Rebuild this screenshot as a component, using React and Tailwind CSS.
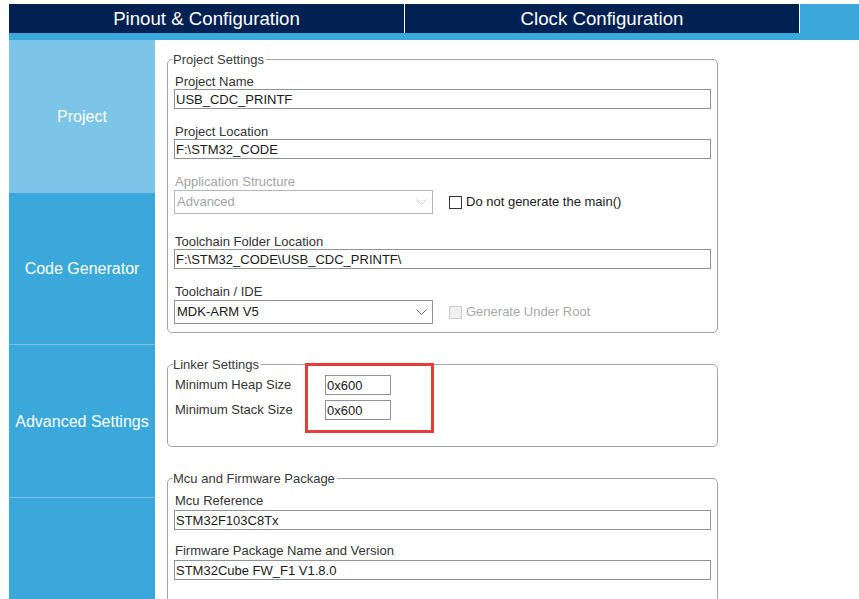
import React from "react";

const Label = ({ children, muted, className = "" }) => (
	<div className={`leading-[15px] pl-px ${muted ? "text-[#a3a3a3]" : "text-[#333]"} ${className}`}>{children}</div>
);

const TextBox = ({ value, className = "" }) => (
	<input
		readOnly
		value={value}
		className={`block h-[20px] border border-[#8e9398] px-[1px] text-[13px] text-[#1a1a1a] bg-white outline-none ${className}`}
	/>
);

const Chevron = ({ color }) => (
	<svg width="11" height="6" viewBox="0 0 11 6" fill="none">
		<polyline points="0.5,0.5 5.5,5.5 10.5,0.5" stroke={color} strokeWidth="1" />
	</svg>
);

const Select = ({ value, disabled }) => (
	<div
		className={`flex items-center justify-between w-[259px] h-[24px] border pl-[2px] pr-[5px] ${
			disabled ? "border-[#b4b8bc] text-[#a3a3a3]" : "border-[#8e9398] text-[#1a1a1a]"
		}`}
	>
		<span>{value}</span>
		<Chevron color={disabled ? "#c6c6c6" : "#6f6f6f"} />
	</div>
);

const Check = ({ label, disabled }) => (
	<div className="flex items-center gap-[4px] ml-[16px]">
		<span
			className={`block w-[13px] h-[13px] border ${
				disabled ? "border-[#cccccc] bg-[#f0f0f0]" : "border-[#333] bg-white"
			}`}
		/>
		<span className={disabled ? "text-[#a8a8a8]" : "text-[#1a1a1a]"}>{label}</span>
	</div>
);

const Group = ({ title, children, className = "" }) => (
	<fieldset className={`w-[551px] border border-[#a0a5aa] rounded-[5px] px-[6px] ${className}`}>
		<legend className="leading-[15px] -ml-px pr-[2px] text-[#3a3a3a]">{title}</legend>
		{children}
	</fieldset>
);

const SideItem = ({ label, active, className = "" }) => (
	<div
		className={`flex items-center justify-center text-[16px] text-white ${
			active ? "bg-[#7cc5e9]" : "bg-[#3aa8db]"
		} ${className}`}
	>
		{label}
	</div>
);

export default function App() {
	return (
		<div className="w-[859px] h-[599px] overflow-hidden bg-white pl-[9px] pt-[4px] flex flex-col text-[13px] font-['Liberation_Sans',Arial,sans-serif]">
			{/* top tabs */}
			<div className="flex h-[29px] bg-[#3aa8db] shrink-0">
				<div className="w-[395px] bg-[#022153] text-white text-[18.67px] flex items-center justify-center">
					Pinout &amp; Configuration
				</div>
				<div className="w-px bg-white" />
				<div className="w-[394px] bg-[#022153] text-white text-[18.67px] flex items-center justify-center">
					Clock Configuration
				</div>
				<div className="w-px bg-white" />
			</div>
			<div className="h-[7px] bg-[#3aa8db] shrink-0" />

			<div className="flex flex-1 min-h-0">
				{/* sidebar */}
				<div className="w-[146px] shrink-0 flex flex-col bg-[#3aa8db]">
					<SideItem label="Project" active className="h-[153px]" />
					<SideItem label="Code Generator" className="h-[152px] pt-px border-b border-[#7cc5e9]" />
					<SideItem label="Advanced Settings" className="h-[153px] pt-[2px] border-b border-[#7cc5e9]" />
				</div>

				{/* settings */}
				<div className="relative flex-1 pl-[12px] pt-[12px]">
					<Group title="Project Settings" className="pt-[7px] pb-[8px]">
						<Label>Project Name</Label>
						<TextBox value="USB_CDC_PRINTF" className="w-full" />

						<Label className="mt-[15px]">Project Location</Label>
						<TextBox value="F:\STM32_CODE" className="w-full" />

						<Label muted className="mt-[15px]">Application Structure</Label>
						<div className="flex items-center mt-px">
							<Select value="Advanced" disabled />
							<Check label="Do not generate the main()" />
						</div>

						<Label className="mt-[20px]">Toolchain Folder Location</Label>
						<TextBox value="F:\STM32_CODE\USB_CDC_PRINTF\" className="w-full" />

						<Label className="mt-[15px]">Toolchain / IDE</Label>
						<div className="flex items-center mt-px">
							<Select value="MDK-ARM V5" />
							<Check label="Generate Under Root" disabled />
						</div>
					</Group>

					<Group title="Linker Settings" className="mt-[24px] pt-[3px] pb-[26px]">
						<div className="grid grid-cols-[150px_66px] gap-y-[5px] items-center pl-px">
							<span className="text-[#333]">Minimum Heap Size</span>
							<TextBox value="0x600" className="w-[66px]" />
							<span className="text-[#333]">Minimum Stack Size</span>
							<TextBox value="0x600" className="w-[66px]" />
						</div>
					</Group>

					<Group title="Mcu and Firmware Package" className="mt-[24px] pt-[7px] pb-[40px]">
						<Label>Mcu Reference</Label>
						<TextBox value="STM32F103C8Tx" className="w-full mt-[2px]" />

						<Label className="mt-[13px]">Firmware Package Name and Version</Label>
						<TextBox value="STM32Cube FW_F1 V1.8.0" className="w-full mt-[2px]" />
					</Group>

					{/* highlight box drawn over the linker inputs */}
					<div className="absolute left-[150px] top-[323px] w-[129px] h-[70px] border-[3px] border-[#ea3b3b] pointer-events-none" />
				</div>
			</div>
		</div>
	);
}
